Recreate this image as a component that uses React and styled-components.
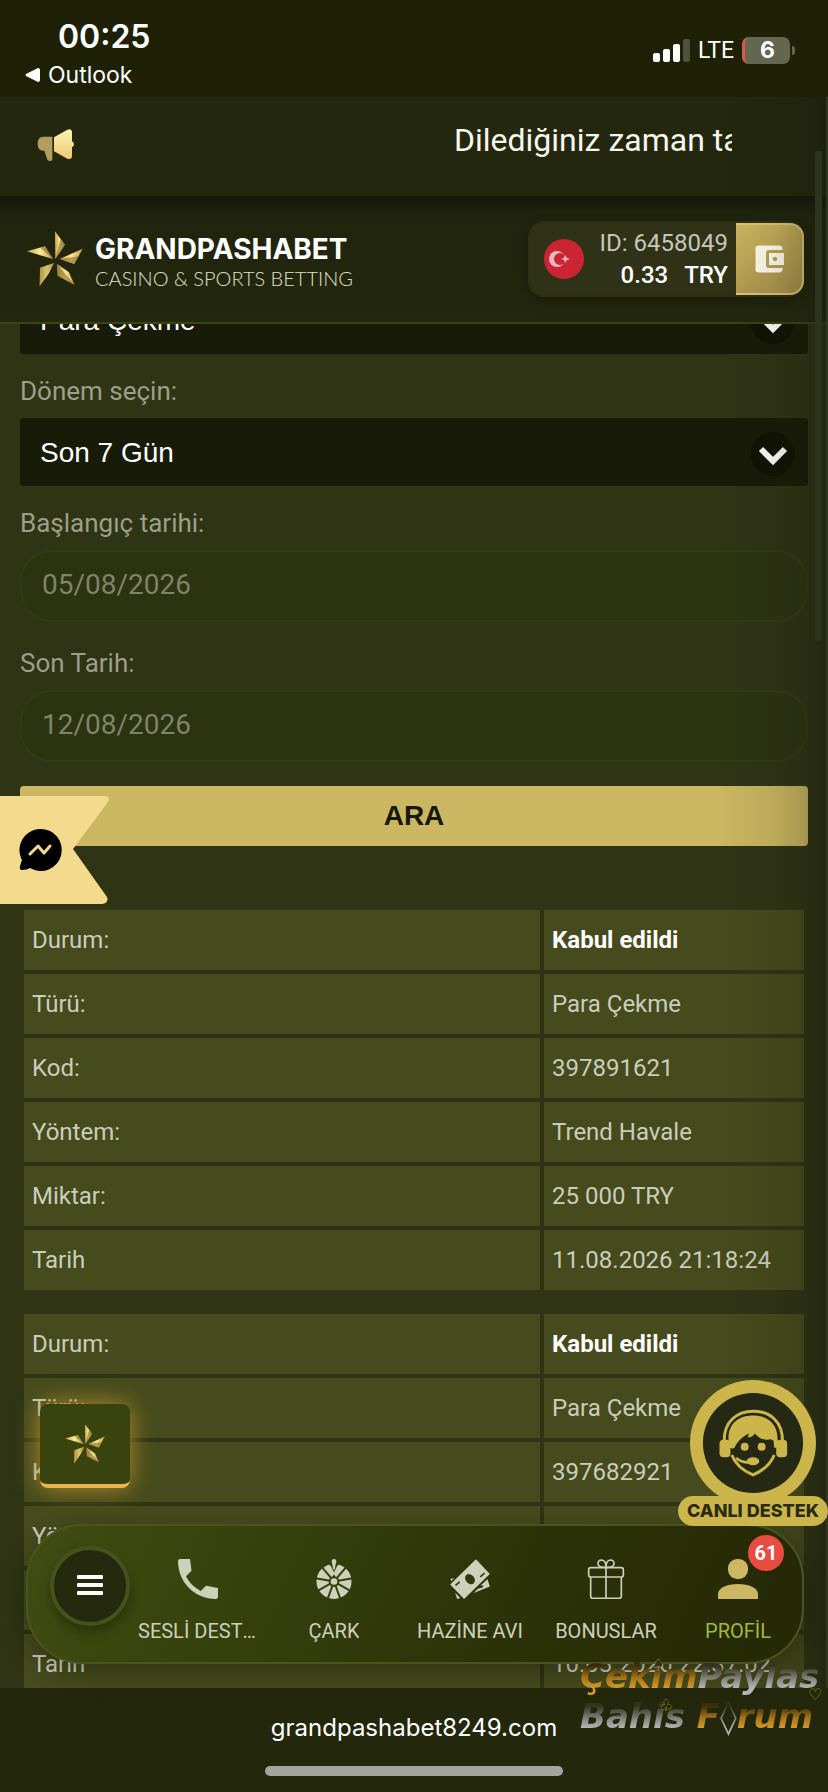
import React, { useLayoutEffect, useRef } from 'react';
import styled, { createGlobalStyle } from 'styled-components';
import { MdAccountBalanceWallet } from 'react-icons/md';

const GlobalStyle = createGlobalStyle`
  * {
    box-sizing: border-box;
  }
  body {
    margin: 0;
    background: #23270d;
    font-family: Roboto, 'Noto Sans', sans-serif;
  }
  button, select, input {
    font: inherit;
    margin: 0;
    border: 0;
  }
  svg {
    display: block;
    flex: none;
  }
`;

const Screen = styled.div`
  position: relative;
  display: flex;
  flex-direction: column;
  height: 100vh;
  overflow: hidden;
  background: #2e3414;
`;

/* ---------- top ---------- */

const StatusBar = styled.div`
  display: flex;
  justify-content: space-between;
  padding: 17px 33px 4px 25px;
  background: #1e2105;
  color: #fff;
  font-family: Inter, sans-serif;
`;

const Clock = styled.div`
  padding-left: 33px;
  font-size: 32px;
  line-height: 40px;
  font-weight: 600;
`;

const BackLink = styled.a`
  display: flex;
  align-items: center;
  gap: 8px;
  color: #fff;
  font-size: 23px;
  line-height: 36px;
  text-decoration: none;
`;

const Signal = styled.div`
  display: flex;
  align-items: center;
  gap: 8px;
  height: 66px;
  font-family: Roboto, sans-serif;
  font-size: 23px;
`;

const Battery = styled.span`
  display: flex;
  align-items: center;
  justify-content: center;
  width: 48px;
  height: 27px;
  border-left: 3px solid #d85a48;
  border-radius: 7px;
  background: #64674f;
  font-family: Inter, sans-serif;
  font-size: 23px;
  font-weight: 700;
`;

const BatteryCap = styled.span`
  width: 3px;
  height: 9px;
  margin-left: -6px;
  border-radius: 0 4px 4px 0;
  background: #64674f;
`;

const Announcement = styled.div`
  display: flex;
  align-items: center;
  justify-content: space-between;
  height: 99px;
  padding: 0 96px 4px 37px;
  background: #23270d;
`;

const Marquee = styled.p`
  width: 278px;
  margin: 0;
  padding-bottom: 10px;
  overflow: hidden;
  white-space: nowrap;
  color: #f6f7ee;
  font-size: 32px;
  line-height: 40px;
`;

const Header = styled.header`
  display: flex;
  align-items: center;
  justify-content: space-between;
  height: 128px;
  padding: 0 24px 0 27px;
  border-bottom: 2px solid #3b4510;
  background: linear-gradient(#15170a, #21240d 18px, #23270d);
`;

const Brand = styled.a`
  display: flex;
  align-items: center;
  gap: 12px;
  text-decoration: none;
`;

const BrandText = styled.div`
  padding-top: 8px;
`;

const BrandName = styled.div`
  color: #fff;
  font-family: Inter, sans-serif;
  font-size: 28px;
  line-height: 30px;
  font-weight: 700;
`;

const BrandTag = styled.div`
  color: #dfe2c9;
  font-family: Lato, sans-serif;
  font-size: 20px;
  line-height: 28px;
  font-weight: 300;
`;

const Account = styled.div`
  display: flex;
  align-items: center;
  height: 76px;
  padding-left: 14px;
  border: 2px solid #2c3015;
  border-right: 0;
  border-radius: 16px;
  background: #2f3217;
  box-shadow: 0 4px 12px rgba(0, 0, 0, 0.25);
`;

const AccountInfo = styled.div`
  padding: 0 8px 0 16px;
  color: #c5c7ba;
  font-size: 24px;
  line-height: 32px;
  text-align: right;
`;

const Balance = styled.div`
  display: flex;
  justify-content: flex-end;
  gap: 16px;
  color: #fff;
  font-weight: 500;
`;

const WalletButton = styled.button`
  display: flex;
  align-items: center;
  justify-content: center;
  width: 68px;
  height: 72px;
  padding: 0;
  border: 2px solid #dcc678;
  border-left: 0;
  border-radius: 0 14px 14px 0;
  background: linear-gradient(150deg, #cfb860, #a48d49);
  color: #fffcf0;
`;

/* ---------- form ---------- */

const Scroller = styled.main`
  flex: 1;
  min-height: 0;
  padding: 24px 20px 32px;
  overflow-y: auto;
  scrollbar-width: none;
`;

const Label = styled.label`
  display: block;
  padding-top: 10px;
  color: #9c9f8a;
  font-size: 26px;
  line-height: 54px;
`;

const SelectBox = styled.div`
  position: relative;
`;

const Select = styled.select`
  display: block;
  width: 100%;
  height: 68px;
  padding: 0 80px 0 20px;
  border-radius: 4px;
  appearance: none;
  background: #181b07;
  color: #fff;
  font-family: 'Liberation Sans', sans-serif;
  font-size: 28px;
`;

const Chevron = styled.svg`
  position: absolute;
  right: 13px;
  top: 14px;
  pointer-events: none;
`;

const DateInput = styled.input`
  display: block;
  width: 100%;
  height: 72px;
  margin-bottom: 4px;
  padding: 0 20px 4px;
  border: 2px solid #323a15;
  border-radius: 32px;
  background: #2c3311;
  color: #7e8467;
  font-size: 28px;
`;

const SearchButton = styled.button`
  display: block;
  width: 100%;
  height: 60px;
  margin: 24px 0 60px;
  padding: 0;
  border-radius: 4px;
  background: #cbb761;
  color: #17180a;
  font-family: 'Liberation Sans', sans-serif;
  font-size: 28px;
  font-weight: 700;
`;

const Records = styled.table`
  width: 100%;
  margin-bottom: 16px;
  border-spacing: 4px;
  table-layout: fixed;
  color: #cbcdbb;
  font-size: 24px;
  line-height: 28px;
`;

const Cell = styled.td`
  width: ${({ $wide }) => ($wide ? '66.5%' : 'auto')};
  height: 60px;
  padding: 0 8px;
  background: #454b1c;
  color: ${({ $strong }) => ($strong ? '#fff' : 'inherit')};
  font-weight: ${({ $strong }) => ($strong ? 700 : 400)};
  text-align: left;
  white-space: nowrap;
`;

/* ---------- bottom ---------- */

const BrowserBar = styled.footer`
  display: flex;
  flex-direction: column;
  align-items: center;
  gap: 22px;
  padding: 24px 0 16px;
  background: #23270c;
  color: #fff;
  font-family: Inter, sans-serif;
  font-size: 24px;
  line-height: 32px;
`;

const HomeIndicator = styled.div`
  width: 36%;
  height: 10px;
  border-radius: 5px;
  background: #a3a49e;
`;

const TabBar = styled.nav`
  position: absolute;
  left: 26px;
  right: 24px;
  bottom: 128px;
  display: flex;
  align-items: center;
  height: 140px;
  padding-left: 22px;
  border: 2px solid #4a541e;
  border-radius: 56px;
  background: linear-gradient(115deg, #424d14, #37420c 25%, #2b3108 65%, #242806);
  box-shadow: 0 8px 24px rgba(0, 0, 0, 0.3);
`;

const MenuButton = styled.button`
  display: flex;
  align-items: center;
  justify-content: center;
  width: 80px;
  height: 80px;
  margin-bottom: 16px;
  padding: 0;
  border: 4px solid #46511b;
  border-radius: 50%;
  background: #252a0e;
  box-shadow: 0 6px 12px rgba(0, 0, 0, 0.3);
`;

const Tabs = styled.div`
  flex: 1;
  display: grid;
  grid-template-columns: repeat(4, minmax(0, 17fr)) minmax(0, 16fr);
  padding-top: 14px;
`;

const Tab = styled.a`
  position: relative;
  display: flex;
  flex-direction: column;
  align-items: center;
  gap: 20px;
  padding: 0 8px;
  color: ${({ $active }) => ($active ? '#a5b542' : '#cdd0ba')};
  font-size: 20px;
  line-height: 24px;
  text-decoration: none;

  span {
    max-width: 100%;
    overflow: hidden;
    text-overflow: ellipsis;
    white-space: nowrap;
  }
`;

const Badge = styled.b`
  position: absolute;
  right: 18px;
  top: -24px;
  width: 36px;
  border-radius: 50%;
  background: #e84b3f;
  color: #fff;
  font-size: 20px;
  line-height: 36px;
  text-align: center;
`;

/* ---------- floating ---------- */

const Ribbon = styled.button`
  position: absolute;
  left: 0;
  top: 796px;
  padding: 0;
  background: none;
`;

const StarButton = styled.button`
  position: absolute;
  left: 40px;
  bottom: 304px;
  display: flex;
  align-items: center;
  justify-content: center;
  width: 90px;
  height: 84px;
  padding: 0;
  border-bottom: 4px solid #eab54a;
  border-radius: 8px;
  background: #38430d;
  box-shadow: 0 0 24px #b48a2c;
`;

const Support = styled.button`
  position: absolute;
  right: 0;
  bottom: 266px;
  display: flex;
  flex-direction: column;
  align-items: center;
  width: 150px;
  padding: 0;
  background: none;
`;

const SupportLabel = styled.span`
  width: 100%;
  margin-top: -10px;
  border-radius: 15px;
  background: #ccb54b;
  color: #2a2b10;
  font-family: Inter, sans-serif;
  font-size: 18px;
  line-height: 30px;
  font-weight: 800;
`;

const Watermark = styled.div`
  position: absolute;
  right: 2px;
  bottom: 56px;
  width: 246px;
  font-family: 'DejaVu Sans', sans-serif;
  font-size: 34px;
  font-style: italic;
  font-weight: 700;
  line-height: 40px;
  white-space: nowrap;
  pointer-events: none;
`;

const Metal = styled.span`
  background: ${({ $gold }) =>
    $gold
      ? 'linear-gradient(#3a2d08 25%, #a87418 55%, #d19a2a 80%)'
      : 'linear-gradient(#33341f 25%, #8b8b88 60%, #b5b5b5 80%)'};
  background-clip: text;
  color: transparent;
`;

const Suit = styled.span`
  position: absolute;
  left: ${({ $x }) => $x}px;
  top: ${({ $y }) => $y}px;
  color: ${({ $color }) => $color};
  font-size: 16px;
  font-style: normal;
  font-weight: 400;
  line-height: 16px;
`;

const EdgeShade = styled.div`
  position: absolute;
  top: 97px;
  right: 0;
  bottom: 104px;
  width: 110px;
  border-right: 2px solid #30371a;
  background: linear-gradient(to right, rgba(25, 26, 14, 0), rgba(25, 26, 14, 0.08) 50%, rgba(25, 26, 14, 0.2) 80%, rgba(25, 26, 14, 0.5));
  pointer-events: none;
`;

const ScrollThumb = styled.div`
  position: absolute;
  top: 151px;
  right: 6px;
  width: 7px;
  height: 490px;
  border-radius: 3px;
  background: #2e331d;
`;

const StarMark = ({ size }) => (
  <svg width={size} height={size} viewBox="80 94 168 168" aria-hidden="true">
    <defs>
      <linearGradient id="starGold" x1="0" y1="0" x2="1" y2="0">
        <stop offset="0" stopColor="#c9a748" />
        <stop offset="0.5" stopColor="#faea90" />
        <stop offset="1" stopColor="#c09c42" />
      </linearGradient>
    </defs>
    <g fill="url(#starGold)">
      <path d="M164 95l30 40-29 43z" />
      <path d="M247 147l-25 46-44-15z" />
      <path d="M170 193l36 25 16 37-50-27z" />
      <path d="M161 190l-15 30-28 40 1-56z" />
      <path d="M80 155l54-15 24 38z" />
    </g>
    <g fill="#7a6227" opacity="0.55">
      <path d="M181 118l13 17-29 43z" />
      <path d="M235 170l-13 23-44-15z" />
      <path d="M170 193l2 35 50 27z" />
      <path d="M119 204l-1 56 43-70z" opacity="0.5" />
      <path d="M120 144l14-4 24 38z" />
    </g>
  </svg>
);

const Megaphone = () => (
  <svg width="37" height="34" viewBox="111 385 111 100" aria-hidden="true">
    <defs>
      <linearGradient id="horn" x1="0" y1="0" x2="0" y2="1">
        <stop offset="0" stopColor="#fbf3b4" />
        <stop offset="1" stopColor="#efc873" />
      </linearGradient>
    </defs>
    <path d="M157 410h-27q-17 0-17 21t17 21h3l9 27q3 4 8 4t7-4z" fill="#b39c5c" />
    <path d="M162 412l40-23q13-5 14 6v29q6 3 6 9t-6 9v27q-1 11-14 7l-40-22z" fill="url(#horn)" />
  </svg>
);

const Flag = () => (
  <svg width="40" height="40" viewBox="0 0 40 40" aria-label="Türkiye">
    <circle cx="20" cy="20" r="20" fill="#cb2433" />
    <circle cx="13" cy="20" r="8" fill="#f0b6bd" />
    <circle cx="16" cy="20" r="6" fill="#cb2433" />
    <path d="M17 20l3-1 1-3 2 3 3 1-3 1-2 3-1-3z" fill="#f0b6bd" />
  </svg>
);

const PhoneIcon = () => (
  <svg width="40" height="40" viewBox="3 3 18 18" fill="currentColor" aria-hidden="true">
    <path d="M6.6 10.8c1.4 2.8 3.8 5.1 6.6 6.6l2.4-2.4 5.4 1.100V20c0 .6-.4 1-1 1C10.600 21 3 13.400 3 4c0-.6.4-1 1-1h4.400L9.100 8.300z" />
  </svg>
);

const WheelIcon = () => (
  <svg width="40" height="40" viewBox="102 239 120 121" aria-hidden="true">
    <circle cx="162" cy="307" r="34" fill="none" stroke="currentColor" strokeWidth="38" />
    <g stroke="#343d0c" strokeWidth="6">
      {[0, 40, 80, 120, 160, 200, 240, 280, 320].map((a) => (
        <path key={a} d="M162 320v44" transform={`rotate(${a + 20} 162 307)`} />
      ))}
    </g>
    <path d="M143 244l19 46 19-46z" fill="#343d0c" />
    <path d="M149 259l13 26 13-26" fill="none" stroke="currentColor" strokeWidth="5" />
    <path d="M155 246q0-7 7-7t7 7l-5 25h-4z" fill="currentColor" />
    <circle cx="162" cy="307" r="16" fill="#343d0c" />
    <circle cx="162" cy="307" r="10" fill="currentColor" />
  </svg>
);

const CashIcon = () => (
  <svg width="40" height="40" viewBox="510 239 120 121" fill="currentColor" aria-hidden="true">
    <path d="M588 240l42 44-78 76-42-44z" />
    <ellipse cx="570" cy="300" rx="13" ry="17" transform="rotate(-42 570 300)" fill="#313909" />
    <path d="M526 319l13-11M601 293l13-11" stroke="#313909" strokeWidth="5" />
    <path d="M623 300l7 22-49 20 13-13 14-4 3-6-9 0z" />
    <path d="M525 341l16 16-10 3zM511 299l11-2-9 9z" />
  </svg>
);

const GiftIcon = () => (
  <svg width="40" height="40" viewBox="138 600 120 120" fill="none" stroke="currentColor" strokeWidth="5" aria-hidden="true">
    <rect x="146" y="626" width="104" height="28" rx="6" />
    <path d="M152 654v58q0 6 6 6h80q6 0 6-6v-58M198 626v92" />
    <path d="M198 625q-24 0-24-11t11-11q13 1 13 22zM198 625q24 0 24-11t-11-11q-13 1-13 22z" />
  </svg>
);

const PersonIcon = () => (
  <svg width="40" height="40" viewBox="0 0 40 40" fill="#cdb762" aria-hidden="true">
    <rect x="10" width="20" height="20" rx="9" />
    <path d="M0 40v-5c0-6 9-10 20-10s20 4 20 10v5z" />
  </svg>
);

const SupportIcon = () => (
  <svg width="126" height="126" viewBox="451 59 380 380" aria-hidden="true">
    <circle cx="641" cy="249" r="190" fill="#ccb54b" />
    <circle cx="641" cy="249" r="151" fill="#252914" />
    <g fill="none" stroke="#ccb54b">
      <path d="M554 242C554 186 590 153 642 153s88 33 88 89" strokeWidth="9" />
      <path d="M577 285q16 40 64 60 48-20 64-60" strokeWidth="9" />
      <path d="M590 294q18 16 45 13" strokeWidth="8" />
    </g>
    <g fill="#ccb54b">
      <path d="M567 262v-27c0-44 30-69 74-69s74 25 74 69v27l-10 2-2-22-8-4c-22 4-38-4-48-18-6 8-12 12-22 12 2-4 3-8 3-12-18 10-32 20-42 42l-6 4z" />
      <rect x="540" y="239" width="33" height="53" rx="12" />
      <rect x="711" y="239" width="33" height="53" rx="12" />
      <circle cx="616" cy="260" r="12" />
      <circle cx="667" cy="260" r="12" />
      <ellipse cx="641" cy="304" rx="19" ry="12" />
    </g>
  </svg>
);

const records = [
  ['397891621', 'Trend Havale', '25 000 TRY', '11.08.2026 21:18:24'],
  ['397682921', 'Trend Havale', '25 000 TRY', '10.08.2026 22:37:02'],
];

const Record = ({ data }) => {
  const [code, method, amount, date] = data;
  const rows = [
    ['Durum:', 'Kabul edildi'],
    ['Türü:', 'Para Çekme'],
    ['Kod:', code],
    ['Yöntem:', method],
    ['Miktar:', amount],
    ['Tarih', date],
  ];

  return (
    <Records>
      <tbody>
        {rows.map(([name, value], i) => (
          <tr key={name}>
            <Cell as="th" scope="row" $wide>{name}</Cell>
            <Cell $strong={i === 0}>{value}</Cell>
          </tr>
        ))}
      </tbody>
    </Records>
  );
};

const Dropdown = ({ value, ...props }) => (
  <SelectBox>
    <Select defaultValue={value} {...props}>
      <option>{value}</option>
    </Select>
    <Chevron width="44" height="44" viewBox="0 0 44 44">
      <circle cx="22" cy="22" r="22" fill="#101203" />
      <path d="M10 17l12 12 12-12" fill="none" stroke="#fff" strokeWidth="6" />
    </Chevron>
  </SelectBox>
);

const App = () => {
  const scroller = useRef(null);

  useLayoutEffect(() => {
    scroller.current.scrollTop = 62;
  }, []);

  return (
    <Screen>
      <GlobalStyle />
      <StatusBar>
        <div>
          <Clock>00:25</Clock>
          <BackLink href="#outlook">
            <svg width="15" height="14" viewBox="0 0 15 14">
              <path d="M1 6L13 0q2 0 2 2v10q0 2-2 2L1 8q-1-1 0-2z" fill="#fff" />
            </svg>
            Outlook
          </BackLink>
        </div>
        <Signal>
          <svg width="37" height="23" viewBox="0 0 37 23" fill="#fff">
            <rect y="14" width="7" height="9" rx="2" />
            <rect x="10" y="10" width="7" height="13" rx="2" />
            <rect x="20" y="5" width="7" height="18" rx="2" />
            <rect x="30" width="7" height="23" rx="2" opacity="0.22" />
          </svg>
          LTE
          <Battery>6</Battery>
          <BatteryCap />
        </Signal>
      </StatusBar>
      <Announcement>
        <Megaphone />
        <Marquee>Dilediğiniz zaman tarafımıza</Marquee>
      </Announcement>
      <Header>
        <Brand href="#home">
          <StarMark size={56} />
          <BrandText>
            <BrandName>GRANDPASHABET</BrandName>
            <BrandTag>CASINO &amp; SPORTS BETTING</BrandTag>
          </BrandText>
        </Brand>
        <Account>
          <Flag />
          <AccountInfo>
            <div>ID: 6458049</div>
            <Balance>
              <span>0.33</span>
              <span>TRY</span>
            </Balance>
          </AccountInfo>
          <WalletButton aria-label="Cüzdan">
            <MdAccountBalanceWallet size={36} />
          </WalletButton>
        </Account>
      </Header>

      <Scroller ref={scroller}>
        <Dropdown aria-label="İşlem türü" value="Para Çekme" />
        <Label htmlFor="period">Dönem seçin:</Label>
        <Dropdown id="period" value="Son 7 Gün" />
        <Label htmlFor="from">Başlangıç tarihi:</Label>
        <DateInput id="from" defaultValue="05/08/2026" />
        <Label htmlFor="to">Son Tarih:</Label>
        <DateInput id="to" defaultValue="12/08/2026" />
        <SearchButton>ARA</SearchButton>
        {records.map((data) => (
          <Record key={data[0]} data={data} />
        ))}
      </Scroller>

      <BrowserBar>
        <div>grandpashabet8249.com</div>
        <HomeIndicator />
      </BrowserBar>

      <EdgeShade />
      <ScrollThumb />

      <Ribbon aria-label="Messenger">
        <svg width="110" height="108" viewBox="0 0 110 108">
          <path d="M0 0h105q6 1 3 6L73 53l34 48q2 6-5 7H0z" fill="#f3da8c" />
          <path d="M40 33a21 21 0 1 1-10 39q-3 2-8 2-3 0-2-4l2-6a21 21 0 0 1 18-31z" fill="#000" />
          <path d="M30 58l8-8 6 7 6-7" fill="none" stroke="#f3da8c" strokeWidth="3" strokeLinecap="round" strokeLinejoin="round" />
        </svg>
      </Ribbon>

      <TabBar>
        <MenuButton aria-label="Menü">
          <svg width="26" height="22" viewBox="0 0 26 22" fill="#fff">
            <rect width="26" height="4" rx="1" />
            <rect y="8" width="26" height="4" rx="1" />
            <rect y="16" width="26" height="4" rx="1" />
          </svg>
        </MenuButton>
        <Tabs>
          <Tab href="#phone"><PhoneIcon /><span>SESLİ DESTEK</span></Tab>
          <Tab href="#wheel"><WheelIcon /><span>ÇARK</span></Tab>
          <Tab href="#treasure"><CashIcon /><span>HAZİNE AVI</span></Tab>
          <Tab href="#bonus"><GiftIcon /><span>BONUSLAR</span></Tab>
          <Tab href="#profile" $active>
            <PersonIcon />
            <span>PROFİL</span>
            <Badge>61</Badge>
          </Tab>
        </Tabs>
      </TabBar>

      <StarButton aria-label="Favoriler">
        <StarMark size={40} />
      </StarButton>

      <Support>
        <SupportIcon />
        <SupportLabel>CANLI DESTEK</SupportLabel>
      </Support>

      <Watermark>
        <div><Metal $gold>Çekim</Metal><Metal>Paylas</Metal></div>
        <div><Metal>Bahis </Metal><Metal $gold>F</Metal><Metal>◊</Metal><Metal $gold>rum</Metal></div>
        <Suit $x={71} $y={1} $color="#a5a592">♤</Suit>
        <Suit $x={79} $y={42} $color="#8f9a0c">♧</Suit>
        <Suit $x={228} $y={31} $color="#8f9a0c">♡</Suit>
      </Watermark>
    </Screen>
  );
};

export default App;
